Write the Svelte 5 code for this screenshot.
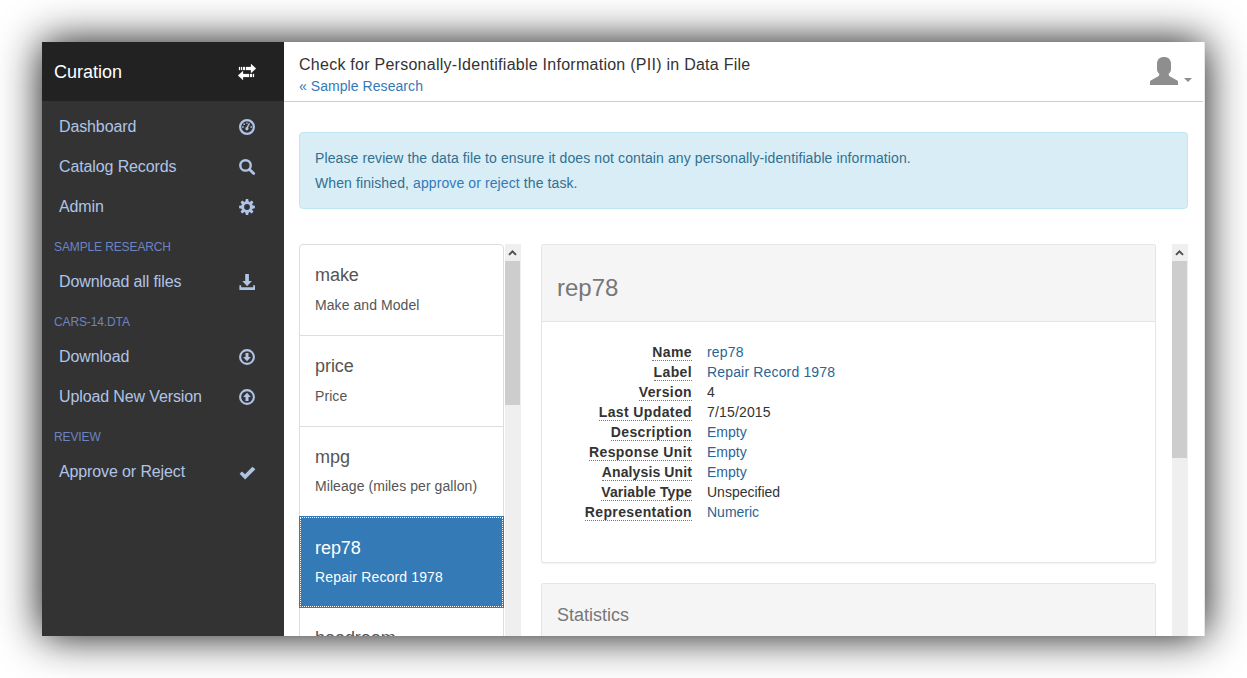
<script>
  const nav = [
    { label: 'Dashboard', icon: 'dashboard' },
    { label: 'Catalog Records', icon: 'search' },
    { label: 'Admin', icon: 'cog' },
    { section: 'SAMPLE RESEARCH' },
    { label: 'Download all files', icon: 'save' },
    { section: 'CARS-14.DTA' },
    { label: 'Download', icon: 'down' },
    { label: 'Upload New Version', icon: 'up' },
    { section: 'REVIEW' },
    { label: 'Approve or Reject', icon: 'ok' }
  ];

  const variables = [
    { name: 'make', label: 'Make and Model' },
    { name: 'price', label: 'Price' },
    { name: 'mpg', label: 'Mileage (miles per gallon)' },
    { name: 'rep78', label: 'Repair Record 1978' },
    { name: 'headroom', label: '' }
  ];
  let selected = $state('rep78');

  const details = [
    { term: 'Name', value: 'rep78', link: true, loose: true },
    { term: 'Label', value: 'Repair Record 1978', link: true, loose: true },
    { term: 'Version', value: '4' },
    { term: 'Last Updated', value: '7/15/2015', loose: true },
    { term: 'Description', value: 'Empty', link: true },
    { term: 'Response Unit', value: 'Empty', link: true },
    { term: 'Analysis Unit', value: 'Empty', link: true, tight: true },
    { term: 'Variable Type', value: 'Unspecified', tight: true },
    { term: 'Representation', value: 'Numeric', link: true }
  ];
  const teeth = [0, 45, 90, 135, 180, 225, 270, 315];
</script>

{#snippet glyph(name)}
  <svg class="glyph" viewBox="0 0 16 16" aria-hidden="true">
    {#if name === 'dashboard'}
      <circle cx="8" cy="8" r="6.9" fill="none" stroke="currentColor" stroke-width="2.2" />
      <path d="M3 7.2h1.7v1.5H3zM4.4 4.6h1.5V6H4.4zM7.2 3.4h1.5v1.3H7.2zM11.4 7.2h1.7v1.5h-1.7zM9.900 3.900l1.200.6-2 4.100a1.600 1.600 0 1 1-1.500-.5z" fill="currentColor" />
    {:else if name === 'search'}
      <circle cx="6.5" cy="6.4" r="5.2" fill="none" stroke="currentColor" stroke-width="2.4" />
      <path d="M10.5 10.4l4.2 4.2" fill="none" stroke="currentColor" stroke-width="2.8" stroke-linecap="round" />
    {:else if name === 'cog'}
      <circle cx="8" cy="8" r="4.35" fill="none" stroke="currentColor" stroke-width="2.9" />
      {#each teeth as angle}
        <path d="M6.200 3L6.800.1h2.400L9.800 3z" fill="currentColor" transform="rotate({angle} 8 8)" />
      {/each}
    {:else if name === 'save'}
      <path d="M6.2 0h3.7v7h3L8.1 12.3 3.3 7h2.9zM.4 11.2h1.8v2.1h12v-2.1H16V16H.4z" fill="currentColor" />
    {:else if name === 'down' || name === 'up'}
      <circle cx="8" cy="8" r="6.9" fill="none" stroke="currentColor" stroke-width="2.1" />
      <path d="M6.5 4h3v4h2.4L8 12.3 4.1 8h2.400z" fill="currentColor" transform={name === 'up' ? 'rotate(180 8 8)' : undefined} />
    {:else if name === 'ok'}
      <path d="M.6 9.800L3 7.400l3 2.800 7.400-7.500L16.400 5.200 6.100 15.400z" fill="currentColor" />
    {/if}
  </svg>
{/snippet}

{#snippet scrollbar(kind)}
  <div class="scrollbar">
    <svg class="arrow" viewBox="0 0 15 17" aria-hidden="true">
      <path d="M4 10.900l3.500-3.500L11 10.900" fill="none" stroke="#505050" stroke-width="2" />
    </svg>
    <div class="thumb {kind}"></div>
  </div>
{/snippet}

<div class="window">
  <aside>
    <div class="brand">
      <span>Curation</span>
      <svg class="transfer" viewBox="0 0 18 16" aria-hidden="true">
        <path d="M1 3h1v3H1zM3 3h1v3H3zM5 3h2v3H5zM8 3h5V0l5 4.500L13 9V6H8zM5 7v3h6v3H5v3l-5-4.500zM12 10h2v3h-2zM15 10h1v3h-1z" fill="currentColor" stroke="currentColor" stroke-width=".25" />
      </svg>
    </div>
    <nav>
      {#each nav as item}
        {#if item.section}
          <div class="section">{item.section}</div>
        {:else}
          <a class="item" href="#top"><span>{item.label}</span>{@render glyph(item.icon)}</a>
        {/if}
      {/each}
    </nav>
  </aside>

  <main>
    <header>
      <div>
        <h1>Check for Personally-Identifiable Information (PII) in Data File</h1>
        <a class="back" href="#top">« Sample Research</a>
      </div>
      <div class="account">
        <svg class="user" viewBox="0 0 28 28" aria-hidden="true">
          <path d="M14 0c4.300 0 7 2.700 7 6.500V12c0 2.200-.8 3.600-2.200 4.600v1.200c0 .8.500 1.300 1.300 1.700l6.700 3.800c.8.400 1.200.8 1.200 1.600V28H0v-3.100c0-.8.400-1.200 1.200-1.600l6.700-3.800c.8-.4 1.300-.9 1.300-1.700v-1.200C7.800 15.600 7 14.200 7 12V6.500C7 2.700 9.700 0 14 0z" fill="#8e8e8e" />
        </svg>
        <span class="caret"></span>
      </div>
    </header>

    <div class="notice">
      <p class="first">Please review the data file to ensure it does not contain any personally-identifiable information.</p>
      <p>When finished, <a href="#top">approve or reject</a> the task.</p>
    </div>

    <div class="columns">
      <div class="list">
        {#each variables as v}
          <button class:active={selected === v.name} onclick={() => (selected = v.name)}>
            <span class="vname">{v.name}</span>
            <span class="vlabel">{v.label}</span>
          </button>
        {/each}
      </div>
      {@render scrollbar('short')}
      <div class="panels">
        <section class="panel">
          <div class="heading"><h2>rep78</h2></div>
          <dl>
            {#each details as d}
              <dt class:tight={d.tight}><span>{d.term}</span></dt>
              <dd class:link={d.link} class:loose={d.loose}>{d.value}</dd>
            {/each}
          </dl>
        </section>
        <section class="panel">
          <div class="heading"><h3>Statistics</h3></div>
        </section>
      </div>
      {@render scrollbar('long')}
    </div>
  </main>
</div>

<style>
  :global(body) {
    background: #fff;
    overflow: hidden;
  }
  .window, .window * {
    box-sizing: border-box;
  }
  .window {
    width: 1163px;
    height: 594px;
    margin: 42px;
    display: flex;
    overflow: hidden;
    background: #fff;
    box-shadow: 0 0 40px rgba(0, 0, 0, .95);
    font: 14px/20px "Liberation Sans", Arial, sans-serif;
    color: #333;
  }
  a {
    color: #337ab7;
    text-decoration: none;
  }
  h1, h2, h3, p, dl, dd {
    margin: 0;
    font-weight: normal;
  }
  aside {
    width: 242px;
    flex: none;
    background: #333;
  }
  .brand {
    height: 59px;
    padding: 0 28px 0 12px;
    display: flex;
    align-items: center;
    justify-content: space-between;
    background: #222;
    color: #fff;
    font-size: 18px;
  }
  .transfer {
    width: 18px;
    height: 16px;
    overflow: visible;
  }
  nav {
    padding-top: 6px;
  }
  .item {
    height: 40px;
    padding: 0 29px 0 17px;
    display: flex;
    align-items: center;
    justify-content: space-between;
    color: #b0c4e6;
    font-size: 16px;
    letter-spacing: -.12px;
  }
  .glyph {
    width: 16px;
    height: 16px;
    overflow: visible;
  }
  .section {
    height: 35px;
    padding: 10px 12px 0;
    color: #6c84c0;
    font-size: 12px;
    letter-spacing: -.12px;
  }
  main {
    flex: 1;
    min-width: 0;
    display: flex;
    flex-direction: column;
    border-right: 1px solid #e7e7e7;
  }
  header {
    height: 60px;
    margin-right: 1px;
    flex: none;
    padding: 12px 11px 0 15px;
    display: flex;
    justify-content: space-between;
    border-bottom: 1px solid #ccc;
  }
  h1 {
    font-size: 16px;
    line-height: 22px;
    letter-spacing: .26px;
  }
  .back {
    display: block;
    letter-spacing: .06px;
  }
  .account {
    display: flex;
    gap: 6px;
    padding-top: 3px;
  }
  .user {
    width: 28px;
    height: 28px;
  }
  .caret {
    margin-top: 21px;
    width: 8px;
    height: 4px;
    background: #8e8e8e;
    clip-path: polygon(0 0, 100% 0, 50% 100%);
  }
  .notice {
    margin: 30px 16px 35px 15px;
    height: 77px;
    flex: none;
    padding: 15px;
    border: 1px solid #bce8f1;
    border-radius: 4px;
    background: #d9edf7;
    color: #31708f;
    letter-spacing: .1px;
  }
  .first {
    margin-bottom: 5px;
  }
  .columns {
    flex: 1;
    min-height: 0;
    overflow: hidden;
    padding: 0 16px 0 15px;
    display: flex;
  }
  .list {
    width: 205px;
    margin-right: 1px;
    flex: none;
  }
  .list button {
    display: flex;
    flex-direction: column;
    justify-content: flex-start;
    width: 100%;
    height: 91.8px;
    margin: 0 0 -1px;
    padding: 21.15px 15px 0;
    border: 1px solid #ddd;
    background: #fff;
    color: #555;
    font: inherit;
    letter-spacing: .07px;
    text-align: left;
  }
  .list button:first-child {
    border-radius: 4px 4px 0 0;
  }
  .list button.active {
    position: relative;
    border-color: #337ab7;
    background: #337ab7;
    color: #fff;
    outline: 1px dotted #fff;
    outline-offset: -2px;
  }
  .list .active .vlabel {
    letter-spacing: .15px;
  }
  .vname {
    margin-bottom: 8.85px;
    font-size: 18px;
    line-height: 19.8px;
    letter-spacing: -.05px;
  }
  .scrollbar {
    width: 16px;
    flex: none;
    background: #efefef;
  }
  .arrow {
    display: block;
    width: 15px;
    height: 17px;
  }
  .thumb {
    width: 15px;
    background: #cdcdcd;
  }
  .short {
    height: 144px;
  }
  .long {
    height: 197px;
  }
  .panels {
    flex: 1;
    margin: 0 16px 0 20px;
  }
  .panel {
    height: 319px;
    margin-bottom: 20px;
    border: 1px solid #e5e5e5;
    border-radius: 2px;
    box-shadow: 0 1px 1px rgba(0, 0, 0, .05);
  }
  .heading {
    padding: 10px 15px;
    border-bottom: 1px solid #e5e5e5;
    background: #f5f5f5;
    color: #777;
  }
  h2 {
    padding: 20px 0 10px;
    font-size: 24px;
    line-height: 26.4px;
  }
  h3 {
    padding: 12px 0 8px;
    font-size: 18px;
    line-height: 19.8px;
  }
  dl {
    padding-top: 20px;
    display: grid;
    grid-template-columns: 150px 1fr;
    column-gap: 15px;
    grid-auto-rows: 20px;
  }
  dt {
    text-align: right;
    font-weight: bold;
    letter-spacing: .38px;
  }
  dt.tight {
    letter-spacing: .12px;
  }
  dt span {
    border-bottom: 1px dotted #777;
  }
  .link {
    color: #2a6496;
  }
  .loose {
    letter-spacing: .16px;
  }
</style>
